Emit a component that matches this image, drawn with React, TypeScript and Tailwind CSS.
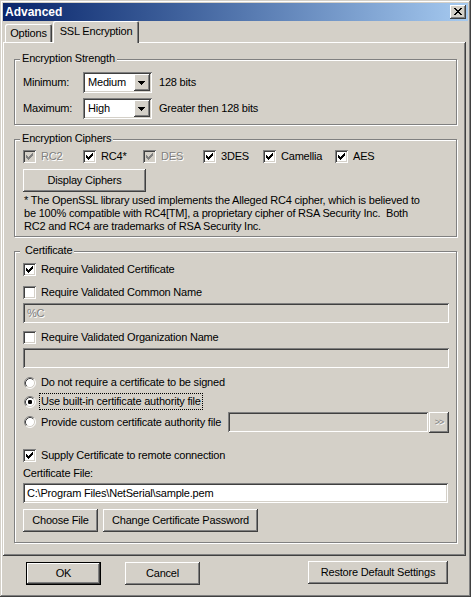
import React from "react";

// classic 3D bevels
const RAISED =
  "shadow-[inset_-1px_-1px_#404040,inset_1px_1px_#ffffff,inset_-2px_-2px_#808080,inset_2px_2px_#d4d0c8]";
const SUNKEN =
  "shadow-[inset_1px_1px_#808080,inset_-1px_-1px_#ffffff,inset_2px_2px_#404040,inset_-2px_-2px_#d4d0c8]";
const DISABLED_TEXT = "text-[#808080] [text-shadow:1px_1px_0_#ffffff]";

function CheckMark({ color }: { color: string }) {
  return (
    <svg
      className="absolute left-[3px] top-[3px]"
      width="7"
      height="7"
      viewBox="0 0 7 7"
      fill={color}
      shapeRendering="crispEdges"
    >
      <rect x="6" y="0" width="1" height="1" />
      <rect x="5" y="1" width="2" height="1" />
      <rect x="0" y="2" width="1" height="1" />
      <rect x="4" y="2" width="3" height="1" />
      <rect x="0" y="3" width="2" height="1" />
      <rect x="3" y="3" width="3" height="1" />
      <rect x="0" y="4" width="5" height="1" />
      <rect x="1" y="5" width="3" height="1" />
      <rect x="2" y="6" width="1" height="1" />
    </svg>
  );
}

interface CheckProps {
  label: string;
  checked?: boolean;
  disabled?: boolean;
  className?: string;
}

function Check({ label, checked, disabled, className = "" }: CheckProps) {
  return (
    <div className={`flex items-center h-[13px] ${className}`}>
      <span
        className={`relative w-[13px] h-[13px] shrink-0 ${SUNKEN} ${
          disabled ? "bg-[#d4d0c8]" : "bg-white"
        }`}
      >
        {checked && <CheckMark color={disabled ? "#808080" : "#000000"} />}
      </span>
      <span className={`ml-[5px] whitespace-nowrap ${disabled ? DISABLED_TEXT : ""}`}>
        {label}
      </span>
    </div>
  );
}

function RadioDot({ selected }: { selected?: boolean }) {
  return (
    <svg width="12" height="12" viewBox="0 0 12 12" className="shrink-0 ml-[1px]">
      <circle cx="6" cy="6" r="5" fill="#ffffff" />
      <path d="M2.11 9.89 A5.5 5.5 0 0 1 9.89 2.11" stroke="#808080" fill="none" />
      <path d="M9.89 2.11 A5.5 5.5 0 0 1 2.11 9.89" stroke="#ffffff" fill="none" />
      <path d="M2.82 9.18 A4.5 4.5 0 0 1 9.18 2.82" stroke="#404040" fill="none" />
      <path d="M9.18 2.82 A4.5 4.5 0 0 1 2.82 9.18" stroke="#d4d0c8" fill="none" />
      {selected && <rect x="4" y="4" width="4" height="4" rx="1.2" fill="#000000" />}
    </svg>
  );
}

function Button({
  children,
  className = "",
  isDefault,
}: {
  children: React.ReactNode;
  className?: string;
  isDefault?: boolean;
}) {
  if (isDefault) {
    return (
      <div className={`border border-black flex ${className}`}>
        <div
          className={`flex-1 flex items-center justify-center shadow-[inset_-1px_-1px_#404040,inset_1px_1px_#ffffff,inset_-2px_-2px_#808080]`}
        >
          {children}
        </div>
      </div>
    );
  }
  return (
    <div className={`flex items-center justify-center whitespace-nowrap ${RAISED} ${className}`}>
      {children}
    </div>
  );
}

function Field({
  value,
  disabled,
  className = "",
}: {
  value?: string;
  disabled?: boolean;
  className?: string;
}) {
  return (
    <div
      className={`h-[20px] flex items-center pl-[4px] ${SUNKEN} ${
        disabled ? "bg-[#d4d0c8] " + DISABLED_TEXT : "bg-white"
      } ${className}`}
    >
      {value}
    </div>
  );
}

function Combo({ value }: { value: string }) {
  return (
    <div className={`relative w-[69px] h-[21px] bg-white flex items-center pl-[5px] ${SUNKEN}`}>
      {value}
      <div className={`absolute right-[2px] top-[2px] w-[16px] h-[17px] bg-[#d4d0c8] ${RAISED}`}>
        <svg
          className="absolute left-[4px] top-[7px]"
          width="7"
          height="4"
          viewBox="0 0 7 4"
          fill="#000"
          shapeRendering="crispEdges"
        >
          <rect x="0" y="0" width="7" height="1" />
          <rect x="1" y="1" width="5" height="1" />
          <rect x="2" y="2" width="3" height="1" />
          <rect x="3" y="3" width="1" height="1" />
        </svg>
      </div>
    </div>
  );
}

function Group({
  legend,
  legendClass = "",
  className = "",
  children,
}: {
  legend: string;
  legendClass?: string;
  className?: string;
  children: React.ReactNode;
}) {
  return (
    <div
      className={`relative ml-[11px] w-[443px] border border-[#808080] shadow-[inset_1px_1px_#ffffff,1px_1px_#ffffff] pl-[8px] pr-[7px] ${className}`}
    >
      <span
        className={`absolute top-[-8px] left-[5px] pl-[2px] pr-[2px] bg-[#d4d0c8] ${legendClass}`}
      >
        {legend}
      </span>
      {children}
    </div>
  );
}

function CloseButton() {
  return (
    <div className={`relative w-[16px] h-[14px] bg-[#d4d0c8] mr-[2px] ${RAISED}`}>
      <svg
        className="absolute left-[4px] top-[3px]"
        width="8"
        height="7"
        viewBox="0 0 8 7"
        fill="#000"
        shapeRendering="crispEdges"
      >
        <rect x="0" y="0" width="2" height="1" />
        <rect x="6" y="0" width="2" height="1" />
        <rect x="1" y="1" width="2" height="1" />
        <rect x="5" y="1" width="2" height="1" />
        <rect x="2" y="2" width="4" height="1" />
        <rect x="3" y="3" width="2" height="1" />
        <rect x="2" y="4" width="4" height="1" />
        <rect x="1" y="5" width="2" height="1" />
        <rect x="5" y="5" width="2" height="1" />
        <rect x="0" y="6" width="2" height="1" />
        <rect x="6" y="6" width="2" height="1" />
      </svg>
    </div>
  );
}

export default function App() {
  return (
    <div className="w-[471px] h-[597px] bg-[#d4d0c8] p-[3px] flex flex-col font-['Liberation_Sans',Arial,sans-serif] text-[11px] leading-[13px] tracking-[-0.2px] text-black select-none shadow-[inset_-1px_-1px_#404040,inset_1px_1px_#d4d0c8,inset_-2px_-2px_#808080,inset_2px_2px_#ffffff]">
      {/* title bar */}
      <div className="h-[18px] flex items-center bg-gradient-to-r from-[#0a246a] to-[#a6caf0]">
        <span className="ml-[2px] text-white font-bold text-[12px] tracking-normal">Advanced</span>
        <div className="ml-auto">
          <CloseButton />
        </div>
      </div>

      {/* tabs */}
      <div className="flex items-end h-[21px]">
        <div className="ml-[2px] w-[47px] h-[18px] flex items-center justify-center rounded-t-[2px] shadow-[inset_1px_1px_#ffffff,inset_-1px_0_#404040,inset_-2px_0_#808080]">
          Options
        </div>
        <div className="relative z-10 -mb-px ml-[1px] w-[86px] h-[22px] flex items-start pt-[4px] justify-center bg-[#d4d0c8] rounded-t-[2px] shadow-[inset_1px_1px_#ffffff,inset_-1px_0_#404040,inset_-2px_0_#808080]">
          SSL Encryption
        </div>
      </div>

      {/* tab panel */}
      <div className={`w-[463px] h-[514px] flex flex-col ${RAISED}`}>
        <Group legend="Encryption Strength" className="mt-[17px] h-[66px] pt-[12px]">
          <div className="flex items-center h-[21px]">
            <span className="w-[60px]">Minimum:</span>
            <Combo value="Medium" />
            <span className="ml-[7px]">128 bits</span>
          </div>
          <div className="flex items-center h-[21px] mt-[5px]">
            <span className="w-[60px]">Maximum:</span>
            <Combo value="High" />
            <span className="ml-[7px]">Greater then 128 bits</span>
          </div>
        </Group>

        <Group legend="Encryption Ciphers" className="mt-[14px] h-[98px] pt-[10px]">
          <div className="flex">
            <Check label="RC2" checked disabled className="w-[60px]" />
            <Check label="RC4*" checked className="w-[60px]" />
            <Check label="DES" checked disabled className="w-[60px]" />
            <Check label="3DES" checked className="w-[60px]" />
            <Check label="Camellia" checked className="w-[72px]" />
            <Check label="AES" checked />
          </div>
          <Button className="mt-[6px] w-[123px] h-[23px]">Display Ciphers</Button>
          <p className="mt-[2px] pl-[1px] whitespace-nowrap">
            * The OpenSSL library used implements the Alleged RC4 cipher, which is believed to
            <br />
            be 100% compatible with RC4[TM], a proprietary cipher of RSA Security Inc.&nbsp; Both
            <br />
            RC2 and RC4 are trademarks of RSA Security Inc.
          </p>
        </Group>

        <Group
          legend="Certificate"
          legendClass="pl-[5px]"
          className="mt-[14px] h-[292px] pt-[11px]"
        >
          <Check label="Require Validated Certificate" checked />
          <Check label="Require Validated Common Name" className="mt-[10px]" />
          <Field value="%C" disabled className="mt-[4px]" />
          <Check label="Require Validated Organization Name" className="mt-[8px]" />
          <Field disabled className="mt-[4px]" />

          <div className="flex items-center h-[13px] mt-[8px]">
            <RadioDot />
            <span className="ml-[5px]">Do not require a certificate to be signed</span>
          </div>
          <div className="flex items-center h-[17px] mt-[4px]">
            <RadioDot selected />
            <span className="ml-[3px] border border-dotted border-black pl-[1px] pr-[1px] pt-[1px] pb-[1px]">
              Use built-in certificate authority file
            </span>
          </div>
          <div className="flex items-center h-[20px] mt-[2px]">
            <RadioDot />
            <span className="ml-[5px] whitespace-nowrap">Provide custom certificate authority file</span>
            <Field disabled className="ml-auto w-[200px] h-[20px]" />
            <Button className="ml-[1px] w-[20px] h-[21px]">
              <span className="text-[9px] leading-[9px] tracking-[-1px] text-[#808080] [text-shadow:1px_1px_0_#ffffff]">
                &gt;&gt;
              </span>
            </Button>
          </div>

          <Check label="Supply Certificate to remote connection" checked className="mt-[17px]" />
          <div className="mt-[5px] h-[13px]">Certificate File:</div>
          <Field value="C:\Program Files\NetSerial\sample.pem" className="mt-[3px] w-[425px]" />
          <div className="flex mt-[6px]">
            <Button className="w-[75px] h-[23px]">Choose File</Button>
            <Button className="ml-[5px] w-[155px] h-[23px]">Change Certificate Password</Button>
          </div>
        </Group>
      </div>

      {/* dialog buttons */}
      <div className="flex items-start mt-[5px]">
        <Button isDefault className="ml-[23px] mt-[1px] w-[75px] h-[23px]">
          OK
        </Button>
        <Button className="ml-[24px] mt-[1px] w-[75px] h-[23px]">Cancel</Button>
        <Button className="ml-auto mr-[20px] w-[140px] h-[23px]">Restore Default Settings</Button>
      </div>
    </div>
  );
}
